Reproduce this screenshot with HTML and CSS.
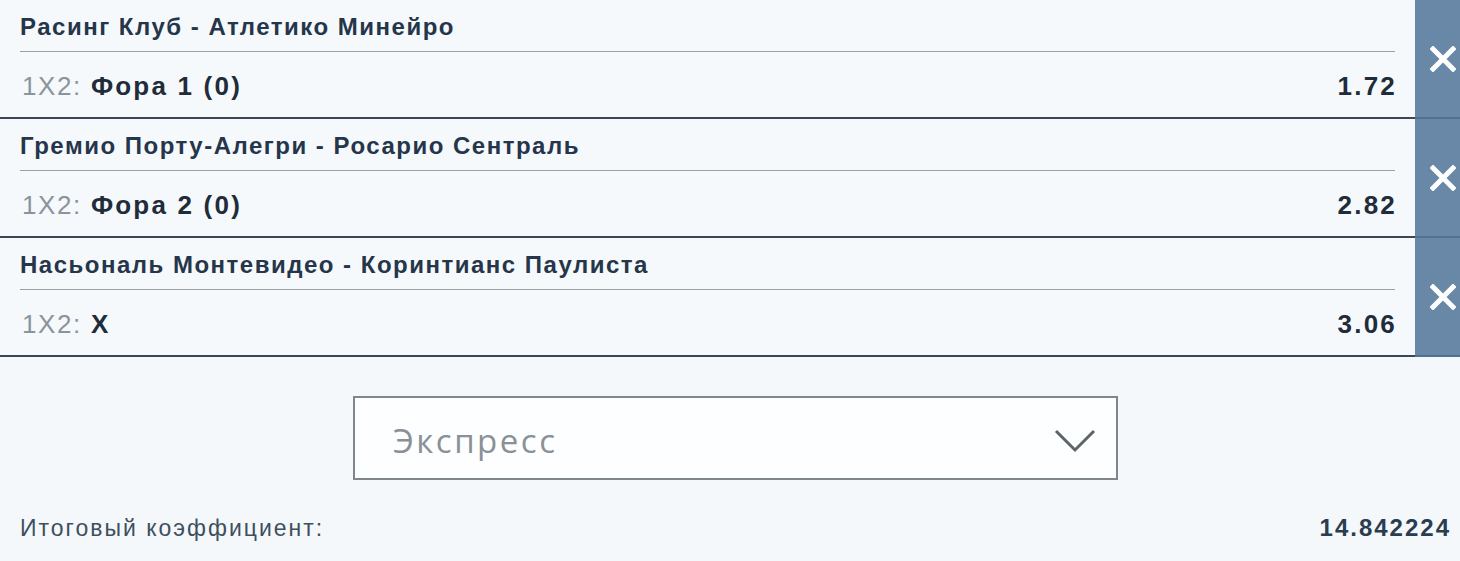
FILE: index.html
```html
<!DOCTYPE html>
<html lang="ru">
<head>
  <meta charset="UTF-8" />
  <meta name="viewport" content="width=device-width, initial-scale=1" />
  <title>Купон</title>
  <link rel="stylesheet" href="styles.css">
</head>
<body>
  <div class="coupon">
    <div class="bet">
      <div class="bet-body">
        <div class="bet-event">Расинг Клуб - Атлетико Минейро</div>
        <div class="bet-line">
          <span class="bet-market">1X2:</span>
          <span class="bet-pick">Фора 1 (0)</span>
          <span class="bet-odds">1.72</span>
        </div>
      </div>
      <button class="bet-remove" aria-label="Удалить">
        <svg width="26" height="26" viewBox="0 0 26 26"><path d="M3 3 L23 23 M23 3 L3 23" stroke="#fff" stroke-width="5" stroke-linecap="square"/></svg>
      </button>
    </div>

    <div class="bet">
      <div class="bet-body">
        <div class="bet-event">Гремио Порту-Алегри - Росарио Сентраль</div>
        <div class="bet-line">
          <span class="bet-market">1X2:</span>
          <span class="bet-pick">Фора 2 (0)</span>
          <span class="bet-odds">2.82</span>
        </div>
      </div>
      <button class="bet-remove" aria-label="Удалить">
        <svg width="26" height="26" viewBox="0 0 26 26"><path d="M3 3 L23 23 M23 3 L3 23" stroke="#fff" stroke-width="5" stroke-linecap="square"/></svg>
      </button>
    </div>

    <div class="bet">
      <div class="bet-body">
        <div class="bet-event">Насьональ Монтевидео - Коринтианс Паулиста</div>
        <div class="bet-line">
          <span class="bet-market">1X2:</span>
          <span class="bet-pick">X</span>
          <span class="bet-odds">3.06</span>
        </div>
      </div>
      <button class="bet-remove" aria-label="Удалить">
        <svg width="26" height="26" viewBox="0 0 26 26"><path d="M3 3 L23 23 M23 3 L3 23" stroke="#fff" stroke-width="5" stroke-linecap="square"/></svg>
      </button>
    </div>

    <div class="bet-type">
      <span class="bet-type-label">Экспресс</span>
      <svg class="bet-type-arrow" width="42" height="24" viewBox="0 0 42 24"><path d="M2 2 L21 21 L40 2" fill="none" stroke="#5d6469" stroke-width="3"/></svg>
    </div>

    <div class="total">
      <span class="total-label">Итоговый коэффициент:</span>
      <span class="total-value">14.842224</span>
    </div>
  </div>
</body>
</html>
```

FILE: styles.css
```css
body {
  font-family: 'Liberation Sans', Arial, sans-serif;
  background: #f4f8fb;
  color: #22313f;
  margin: 0;
  padding: 0;
}

.coupon {
  width: 1460px;
}

.bet {
  display: flex;
  height: 119px;
}

.bet-body {
  flex: 1;
  display: flex;
  flex-direction: column;
  padding: 0 20px;
  background: #f6f9fc;
  border-bottom: 2px solid #3b4853;
}

.bet-event {
  height: 52px;
  display: flex;
  align-items: center;
  font-size: 24px;
  font-weight: bold;
  letter-spacing: 1.5px;
  color: #25354a;
  border-bottom: 1px solid #9aa2a8;
  box-sizing: border-box;
  padding-top: 2px;
}

.bet-line {
  flex: 1;
  display: flex;
  align-items: center;
  font-size: 26px;
  letter-spacing: 1.6px;
  padding-top: 3px;
}

.bet-market {
  color: #8a949c;
  margin-left: 2px;
  margin-right: 9px;
}

.bet-pick {
  font-weight: bold;
  letter-spacing: 2.2px;
  color: #1f2c39;
}

.bet-odds {
  margin-left: auto;
  font-weight: bold;
  letter-spacing: 2.2px;
  color: #1f2c39;
  margin-right: -2px;
}

.bet-remove {
  width: 45px;
  border: none;
  padding: 0 0 0 15px;
  background: #6987a6;
  border-bottom: 2px solid #53708d;
  display: flex;
  align-items: center;
  justify-content: flex-start;
  cursor: pointer;
}

.bet-type {
  width: 765px;
  height: 84px;
  box-sizing: border-box;
  margin: 39px 0 0 353px;
  border: 2px solid #80878c;
  background: #fdfeff;
  display: flex;
  align-items: center;
  padding: 4px 20px 0 38px;
}

.bet-type-label {
  font-family: 'Open Sans', sans-serif;
  font-size: 33px;
  color: #8b9095;
  letter-spacing: 2.5px;
}

.bet-type-arrow {
  margin-left: auto;
  margin-top: 2px;
}

.total {
  display: flex;
  justify-content: space-between;
  align-items: center;
  height: 40px;
  margin-top: 28px;
  padding: 0 9px 0 20px;
}

.total-label {
  font-size: 23px;
  letter-spacing: 2px;
  color: #3e4f5d;
}

.total-value {
  font-size: 24px;
  font-weight: bold;
  letter-spacing: 2px;
  color: #2a3d50;
}
```
